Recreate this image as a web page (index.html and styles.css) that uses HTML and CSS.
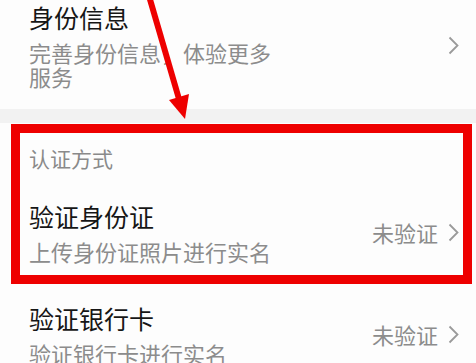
FILE: index.html
```html
<!DOCTYPE html>
<html lang="zh">
<head>
<meta charset="utf-8">
<link rel="stylesheet" href="styles.css">
</head>
<body>
<div class="page">
  <div class="item item-first">
    <div class="text">
      <div class="title">身份信息</div>
      <div class="sub">完善身份信息，体验更多服务</div>
    </div>
    <div class="right">
      <svg class="chev" viewBox="0 0 11 19" width="11" height="19"><polyline points="1.5,1.5 9.5,9.5 1.5,17.5" fill="none" stroke="#9a9a9a" stroke-width="1.8"/></svg>
    </div>
  </div>
  <div class="band"></div>
  <div class="section">
    <div class="header">认证方式</div>
    <div class="item">
      <div class="text">
        <div class="title">验证身份证</div>
        <div class="sub">上传身份证照片进行实名</div>
      </div>
      <div class="right">
        <span class="status">未验证</span>
        <svg class="chev" viewBox="0 0 11 19" width="11" height="19"><polyline points="1.5,1.5 9.5,9.5 1.5,17.5" fill="none" stroke="#9a9a9a" stroke-width="1.8"/></svg>
      </div>
    </div>
    <div class="item">
      <div class="text">
        <div class="title">验证银行卡</div>
        <div class="sub">验证银行卡进行实名</div>
      </div>
      <div class="right">
        <span class="status">未验证</span>
        <svg class="chev" viewBox="0 0 11 19" width="11" height="19"><polyline points="1.5,1.5 9.5,9.5 1.5,17.5" fill="none" stroke="#9a9a9a" stroke-width="1.8"/></svg>
      </div>
    </div>
  </div>
  <div class="redbox"></div>
  <svg class="arrow" width="476" height="363" viewBox="0 0 476 363">
    <line x1="149" y1="-4" x2="179" y2="99" stroke="#ee0000" stroke-width="6"/>
    <polygon points="185,119 169,100 189,94" fill="#ee0000"/>
  </svg>
</div>
</body>
</html>
```
FILE: styles.css
```css
html, body {
  margin: 0;
  padding: 0;
  background: #fdfdfd;
}
.page {
  position: relative;
  width: 476px;
  height: 363px;
  overflow: hidden;
  font-family: "Noto Sans CJK SC", "Noto Sans", sans-serif;
  background: #fdfdfd;
}
.item {
  display: flex;
  align-items: center;
  justify-content: space-between;
  padding: 18px 17px 22px 29px;
}
.item-first {
  padding-top: 2px;
  padding-bottom: 21px;
}
.text {
  display: flex;
  flex-direction: column;
  gap: 8px;
  max-width: 250px;
}
.title {
  font-size: 25px;
  line-height: 30px;
  color: #161616;
}
.sub {
  font-size: 22px;
  line-height: 24px;
  color: #8c8c8c;
}
.right {
  display: flex;
  align-items: center;
  gap: 10px;
}
.status {
  font-size: 22px;
  line-height: 24px;
  color: #8c8c8c;
}
.chev {
  display: block;
}
.band {
  height: 14px;
  background: #f2f2f2;
}
.section {
  padding-top: 20px;
}
.header {
  padding-left: 29px;
  font-size: 21px;
  line-height: 30px;
  color: #8a8a8a;
  margin-bottom: 10px;
}
.redbox {
  position: absolute;
  left: 11px;
  top: 124px;
  width: 461px;
  height: 160px;
  box-sizing: border-box;
  border: 9px solid #ee0000;
}
.arrow {
  position: absolute;
  left: 0;
  top: 0;
}
```
